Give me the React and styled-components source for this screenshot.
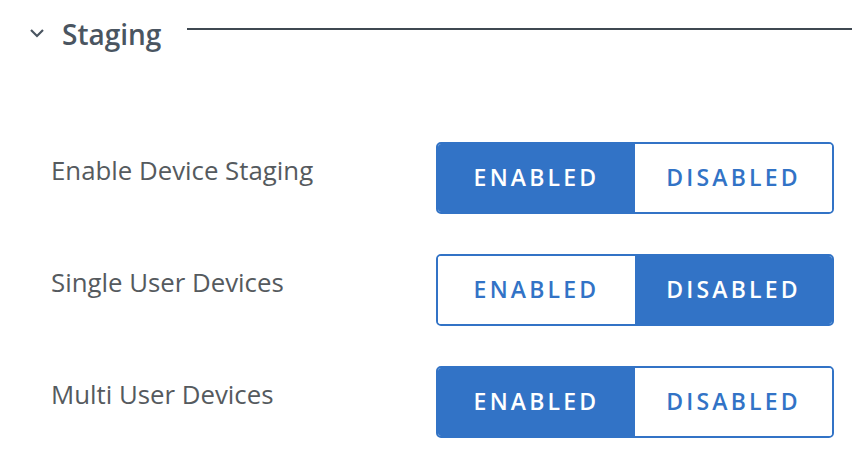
import React from "react";
import styled, { createGlobalStyle } from "styled-components";

const Global = createGlobalStyle`
  html, body { margin: 0; padding: 0; background: #fff; }
  body { font-family: "Open Sans", "Liberation Sans", sans-serif; }
`;

const Page = styled.div`
  width: 852px;
  height: 466px;
  overflow: hidden;
`;

const Header = styled.div`
  display: flex;
  align-items: center;
  height: 58px;
  padding-left: 29px;
  margin-top: 5px;
`;

const Chevron = styled.svg`
  width: 16px;
  height: 10px;
  flex: none;
  margin-right: 17px;
  margin-top: -3px;
`;

const Title = styled.h2`
  margin: 0;
  font-size: 28px;
  font-weight: 600;
  color: #4a5561;
  line-height: 1;
  padding-bottom: 1px;
`;

const Rule = styled.div`
  flex: 1;
  height: 2px;
  background: #3f4851;
  margin-left: 26px;
  align-self: flex-start;
  margin-top: 23px;
`;

const Rows = styled.div`
  display: flex;
  flex-direction: column;
  gap: 40px;
  padding: 79px 18px 0 51px;
`;

const Row = styled.div`
  display: flex;
  align-items: center;
  justify-content: space-between;
  height: 72px;
`;

const Label = styled.div`
  font-size: 25.8px;
  color: #555a5e;
  margin-top: -16px;
`;

const Toggle = styled.div`
  display: flex;
  width: 398px;
  height: 72px;
  box-sizing: border-box;
  border: 2px solid #3273c6;
  border-radius: 5px;
  overflow: hidden;
`;

const Option = styled.button`
  flex: 1;
  border: none;
  margin: 0;
  padding: 0 0 2px 0;
  font-family: inherit;
  font-size: 23px;
  font-weight: 600;
  letter-spacing: 3.2px;
  background: ${p => (p.$active ? "#3273c6" : "#fff")};
  color: ${p => (p.$active ? "#fff" : "#3273c6")};
  cursor: pointer;
`;

const rows = [
  { label: "Enable Device Staging", enabled: true },
  { label: "Single User Devices", enabled: false },
  { label: "Multi User Devices", enabled: true },
];

export default function App() {
  return (
    <Page>
      <Global />
      <Header>
        <Chevron viewBox="0 0 16 10">
          <path d="M2 2 L8 8 L14 2" fill="none" stroke="#4a5561" strokeWidth="2.2" />
        </Chevron>
        <Title>Staging</Title>
        <Rule />
      </Header>
      <Rows>
        {rows.map(r => (
          <Row key={r.label}>
            <Label>{r.label}</Label>
            <Toggle>
              <Option $active={r.enabled}>ENABLED</Option>
              <Option $active={!r.enabled}>DISABLED</Option>
            </Toggle>
          </Row>
        ))}
      </Rows>
    </Page>
  );
}
